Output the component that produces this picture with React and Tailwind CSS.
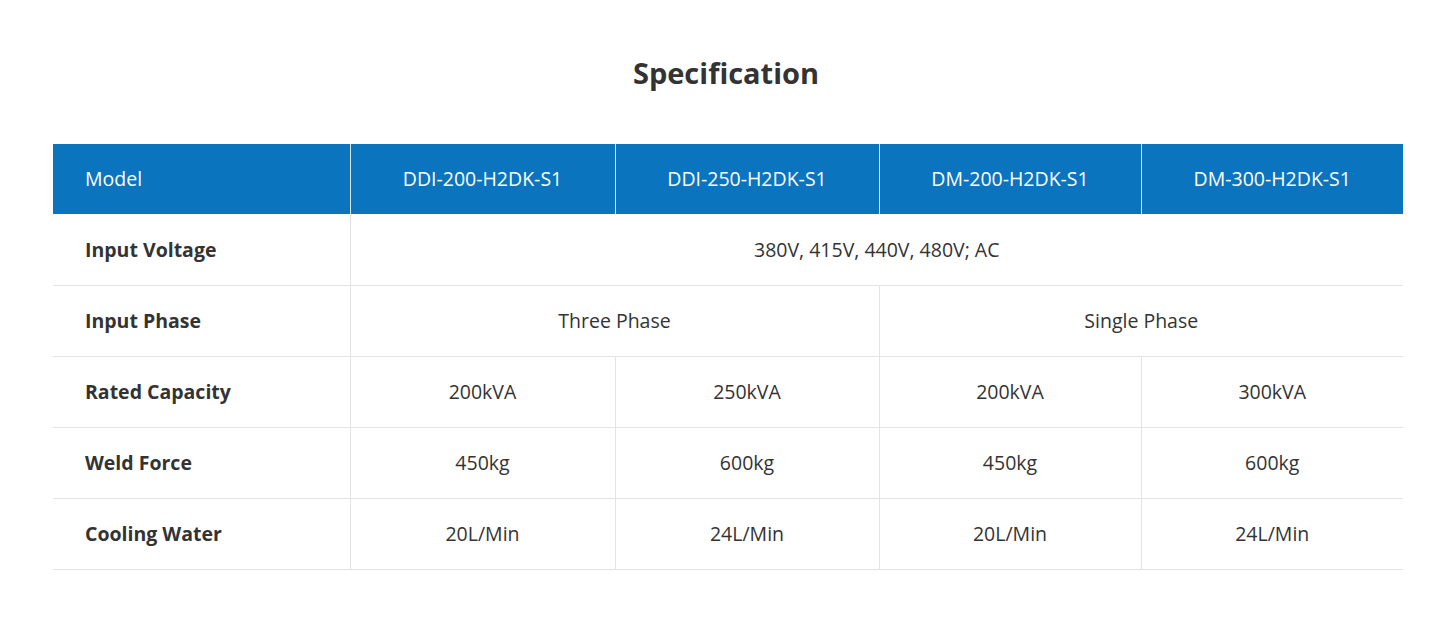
import React from "react";

const models = ["DDI-200-H2DK-S1", "DDI-250-H2DK-S1", "DM-200-H2DK-S1", "DM-300-H2DK-S1"];

const rows = [
  { label: "Rated Capacity", values: ["200kVA", "250kVA", "200kVA", "300kVA"] },
  { label: "Weld Force", values: ["450kg", "600kg", "450kg", "600kg"] },
  { label: "Cooling Water", values: ["20L/Min", "24L/Min", "20L/Min", "24L/Min"] },
];

const labelCell = "h-[71px] pl-8 text-left font-bold border-b border-[#e3e3e3]";
const valueCell = "h-[71px] text-center border-b border-l border-[#e3e3e3]";

export default function App() {
  return (
    <div className="min-h-[638px] bg-white pt-[54px] text-[#333] font-['Open_Sans',sans-serif]">
      <h2 className="text-center text-[29px] leading-[38px] font-bold text-[#333]">Specification</h2>
      <div className="px-[53px] pt-[52px]">
        <table className="w-full table-fixed border-collapse text-[19.5px]">
          <colgroup>
            <col className="w-[297px]" />
            <col className="w-[265px]" />
            <col className="w-[264px]" />
            <col className="w-[262px]" />
            <col className="w-[262px]" />
          </colgroup>
          <thead>
            <tr className="bg-[#0a74be] text-white">
              <th className="h-[70px] pl-8 text-left font-normal">Model</th>
              {models.map((m) => (
                <th key={m} className="h-[70px] text-center font-normal border-l border-[#d7e6f3]">
                  {m}
                </th>
              ))}
            </tr>
          </thead>
          <tbody>
            <tr>
              <td className={labelCell}>Input Voltage</td>
              <td colSpan={4} className={valueCell}>380V, 415V, 440V, 480V; AC</td>
            </tr>
            <tr>
              <td className={labelCell}>Input Phase</td>
              <td colSpan={2} className={valueCell}>Three Phase</td>
              <td colSpan={2} className={valueCell}>Single Phase</td>
            </tr>
            {rows.map((r) => (
              <tr key={r.label}>
                <td className={labelCell}>{r.label}</td>
                {r.values.map((v, i) => (
                  <td key={i} className={valueCell}>{v}</td>
                ))}
              </tr>
            ))}
          </tbody>
        </table>
      </div>
    </div>
  );
}
